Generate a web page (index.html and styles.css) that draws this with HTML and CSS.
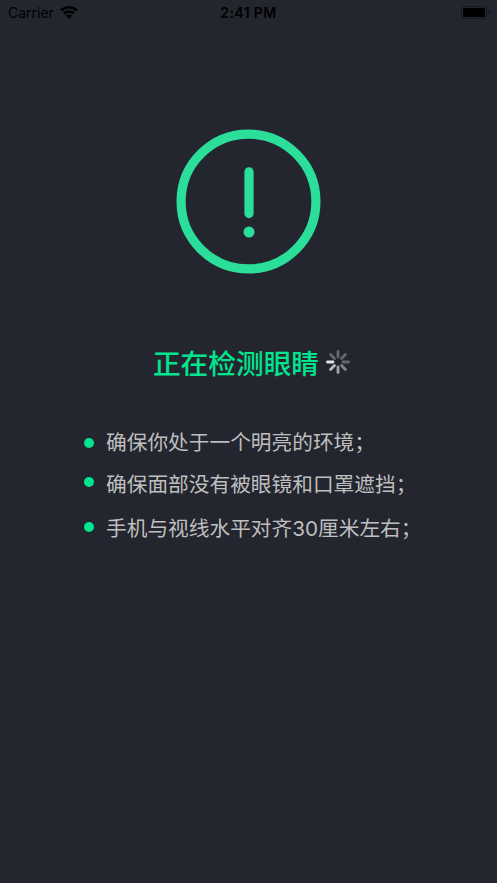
FILE: index.html
```html
<!DOCTYPE html>
<html lang="zh-CN">
<head>
<meta charset="utf-8">
<title>正在检测眼睛</title>
<link rel="stylesheet" href="styles.css">
</head>
<body>
<header class="status">
  <div class="carrier"><span>Carrier</span>
    <svg class="wifi" viewBox="0 0 18 13"><path d="M9 0C5.600 0 2.500 1.300.2 3.500L2 5.400A10.200 10.200 0 0 1 16 5.400L17.800 3.500A12.800 12.800 0 0 0 9 0Z"/><path d="M9 4.300C6.700 4.300 4.700 5.100 3.100 6.600L5 8.500A5.900 5.900 0 0 1 13 8.500L14.900 6.600A8.600 8.600 0 0 0 9 4.300Z"/><path d="M9 8.500C7.800 8.500 6.800 8.900 6 9.700L9 12.800L12 9.700C11.200 8.900 10.200 8.500 9 8.500Z"/></svg>
  </div>
  <time class="time">2:41 PM</time>
  <svg class="battery" viewBox="0 0 30 13"><rect class="shell" x=".5" y=".5" width="25" height="12" rx="3"/><rect x="2" y="2" width="22" height="9" rx="1.500"/><path class="cap" d="M27.500 4.500C29.200 5 29.200 8 27.500 8.500Z"/></svg>
</header>
<main>
  <svg class="alert" viewBox="0 0 146 146"><circle class="ring" cx="72.500" cy="72.500" r="67.400"/><path class="bar" d="M73 42.800V84.600"/><circle class="dot" cx="73" cy="103" r="5.500"/></svg>
  <h1><span>正在检测眼睛</span>
    <svg class="spinner" viewBox="-12 -12 24 24"><g opacity=".35"><path d="M0-5V-10.500"/><path d="M0-5V-10.500" transform="rotate(45)"/><path d="M0-5V-10.500" transform="rotate(90)"/></g><path d="M0-5V-10.500" transform="rotate(135)" opacity=".5"/><path d="M0-5V-10.500" transform="rotate(180)" opacity=".65"/><path d="M0-5V-10.500" transform="rotate(225)" opacity=".8"/><path d="M0-5V-10.500" transform="rotate(270)"/><path d="M0-5V-10.500" transform="rotate(315)" opacity=".35"/></svg>
  </h1>
  <ul>
    <li>确保你处于一个明亮的环境；</li>
    <li>确保面部没有被眼镜和口罩遮挡；</li>
    <li>手机与视线水平对齐30厘米左右；</li>
  </ul>
</main>
</body>
</html>
```
FILE: styles.css
```css
body {
  margin: 0;
  height: 883px;
  overflow: hidden;
  background: #24262f;
  font-family: Inter, "Noto Sans CJK SC", sans-serif;
}
.status {
  display: grid;
  grid-template-columns: 1fr auto 1fr;
  align-items: center;
  height: 25px;
  padding: 0 6px 0 8px;
  color: #000;
  font-size: 14px;
}
.carrier { display: flex; align-items: center; gap: 6px; }
.wifi { width: 18px; height: 13px; }
.time { margin-right: 2px; font-weight: 600; letter-spacing: .4px; }
.battery { width: 30px; height: 13px; justify-self: end; }
.shell { fill: none; stroke: #15171c; }
.cap { fill: #15171c; }
main { display: flex; flex-direction: column; align-items: center; }
.alert { width: 146px; height: 146px; margin-top: 104px; }
.ring, .bar { fill: none; stroke: #2bdf9b; stroke-width: 9.200; stroke-linecap: round; }
.dot { fill: #2bdf9b; }
h1 {
  display: flex;
  align-items: center;
  gap: 7px;
  height: 40px;
  margin: 69px 0 0 6px;
  color: #00e58e;
  font-size: 27.700px;
  line-height: 40px;
  font-weight: 500;
}
.spinner { width: 24px; height: 24px; margin-bottom: 4px; fill: none; stroke: #e4e4e5; stroke-width: 2.800; stroke-linecap: round; }
ul { list-style: none; width: 413px; margin: 36px 0 0; padding: 0; box-sizing: border-box; }
li {
  display: flex;
  align-items: center;
  gap: 12px;
  height: 41px;
  margin-left: 42px;
  color: #bebfbe;
  font-size: 20.700px;
  font-weight: 400;
  white-space: nowrap;
}
li::before { content: ""; width: 10px; height: 10px; margin-bottom: 1px; border-radius: 50%; background: #00e58e; }
li:first-child::before { margin: 4px 0 0; }
li:nth-child(2) { margin-top: 1px; }
li:nth-child(3) { margin-top: 3.500px; }
```
